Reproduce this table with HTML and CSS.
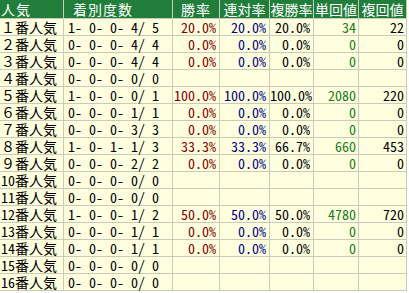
FILE: index.html
```html
<!DOCTYPE html>
<html lang="ja">
<head>
<meta charset="utf-8">
<link rel="stylesheet" href="styles.css">
</head>
<body>
<table class="stats">
  <colgroup>
    <col class="c-label"><col class="c-rec"><col class="c-win"><col class="c-ren"><col class="c-fuku"><col class="c-tan"><col class="c-fk">
  </colgroup>
  <thead>
    <tr>
      <th class="h-label">人気</th>
      <th class="h-rec">着別度数</th>
      <th class="h-short">勝率</th>
      <th>連対率</th>
      <th>複勝率</th>
      <th>単回値</th>
      <th>複回値</th>
    </tr>
  </thead>
  <tbody>
    <tr><td class="label">１番人気</td><td class="rec">1- 0- 0- 4/ 5</td><td class="win">20.0%</td><td class="ren">20.0%</td><td class="fuku">20.0%</td><td class="tan">34</td><td class="fk">22</td></tr>
    <tr><td class="label">２番人気</td><td class="rec">0- 0- 0- 4/ 4</td><td class="win">0.0%</td><td class="ren">0.0%</td><td class="fuku">0.0%</td><td class="tan">0</td><td class="fk">0</td></tr>
    <tr><td class="label">３番人気</td><td class="rec">0- 0- 0- 4/ 4</td><td class="win">0.0%</td><td class="ren">0.0%</td><td class="fuku">0.0%</td><td class="tan">0</td><td class="fk">0</td></tr>
    <tr><td class="label">４番人気</td><td class="rec">0- 0- 0- 0/ 0</td><td class="win"></td><td class="ren"></td><td class="fuku"></td><td class="tan"></td><td class="fk"></td></tr>
    <tr><td class="label">５番人気</td><td class="rec">1- 0- 0- 0/ 1</td><td class="win">100.0%</td><td class="ren">100.0%</td><td class="fuku">100.0%</td><td class="tan">2080</td><td class="fk">220</td></tr>
    <tr><td class="label">６番人気</td><td class="rec">0- 0- 0- 1/ 1</td><td class="win">0.0%</td><td class="ren">0.0%</td><td class="fuku">0.0%</td><td class="tan">0</td><td class="fk">0</td></tr>
    <tr><td class="label">７番人気</td><td class="rec">0- 0- 0- 3/ 3</td><td class="win">0.0%</td><td class="ren">0.0%</td><td class="fuku">0.0%</td><td class="tan">0</td><td class="fk">0</td></tr>
    <tr><td class="label">８番人気</td><td class="rec">1- 0- 1- 1/ 3</td><td class="win">33.3%</td><td class="ren">33.3%</td><td class="fuku">66.7%</td><td class="tan">660</td><td class="fk">453</td></tr>
    <tr><td class="label">９番人気</td><td class="rec">0- 0- 0- 2/ 2</td><td class="win">0.0%</td><td class="ren">0.0%</td><td class="fuku">0.0%</td><td class="tan">0</td><td class="fk">0</td></tr>
    <tr><td class="label">10番人気</td><td class="rec">0- 0- 0- 0/ 0</td><td class="win"></td><td class="ren"></td><td class="fuku"></td><td class="tan"></td><td class="fk"></td></tr>
    <tr><td class="label">11番人気</td><td class="rec">0- 0- 0- 0/ 0</td><td class="win"></td><td class="ren"></td><td class="fuku"></td><td class="tan"></td><td class="fk"></td></tr>
    <tr><td class="label">12番人気</td><td class="rec">1- 0- 0- 1/ 2</td><td class="win">50.0%</td><td class="ren">50.0%</td><td class="fuku">50.0%</td><td class="tan">4780</td><td class="fk">720</td></tr>
    <tr><td class="label">13番人気</td><td class="rec">0- 0- 0- 1/ 1</td><td class="win">0.0%</td><td class="ren">0.0%</td><td class="fuku">0.0%</td><td class="tan">0</td><td class="fk">0</td></tr>
    <tr><td class="label">14番人気</td><td class="rec">0- 0- 0- 1/ 1</td><td class="win">0.0%</td><td class="ren">0.0%</td><td class="fuku">0.0%</td><td class="tan">0</td><td class="fk">0</td></tr>
    <tr><td class="label">15番人気</td><td class="rec">0- 0- 0- 0/ 0</td><td class="win"></td><td class="ren"></td><td class="fuku"></td><td class="tan"></td><td class="fk"></td></tr>
    <tr><td class="label">16番人気</td><td class="rec">0- 0- 0- 0/ 0</td><td class="win"></td><td class="ren"></td><td class="fuku"></td><td class="tan"></td><td class="fk"></td></tr>
  </tbody>
</table>
</body>
</html>
```
FILE: styles.css
```css
html, body {
  margin: 0;
  padding: 0;
  background: #ffffff;
}

.stats {
  border-collapse: separate;
  border-spacing: 0;
  table-layout: fixed;
  width: 407px;
  font-family: "Noto Sans Mono CJK JP", "Noto Sans CJK JP", "DejaVu Sans Mono", monospace;
  font-size: 14px;
  line-height: 16px;
  background: #ffffe0;
}

.c-label { width: 64px; }
.c-rec { width: 109px; }
.c-win { width: 47px; }
.c-ren { width: 50px; }
.c-fuku { width: 44px; }
.c-tan { width: 45px; }
.c-fk { width: 48px; }

.stats th {
  background: #217d3a;
  color: #ffffff;
  font-weight: normal;
  font-size: 14px;
  height: 18px;
  line-height: 18px;
  padding: 0;
  text-align: center;
  white-space: nowrap;
  border-right: 1px solid #c9cbb8;
  border-bottom: 1px solid #c9cbb8;
}

.stats th.h-label {
  text-align: left;
  padding-left: 1px;
  letter-spacing: 1px;
}

.stats th.h-rec {
  text-align: left;
  padding-left: 9px;
  letter-spacing: 1px;
}

.stats th.h-short {
  letter-spacing: 1px;
}

.stats td {
  height: 16px;
  padding: 0;
  white-space: pre;
  border-right: 1px solid #c9cbb8;
  border-bottom: 1px solid #c9cbb8;
  color: #000000;
}

.stats td.label {
  padding-left: 1px;
}

.stats td.rec {
  padding-left: 4px;
}

.stats td.win,
.stats td.ren,
.stats td.fuku,
.stats td.tan,
.stats td.fk {
  text-align: right;
  padding-right: 3px;
}

.stats td.win { color: #800000; }
.stats td.ren { color: #000080; }
.stats td.tan { color: #1d7a1d; padding-right: 2px; }
.stats td.fk { padding-right: 2px; }
```
